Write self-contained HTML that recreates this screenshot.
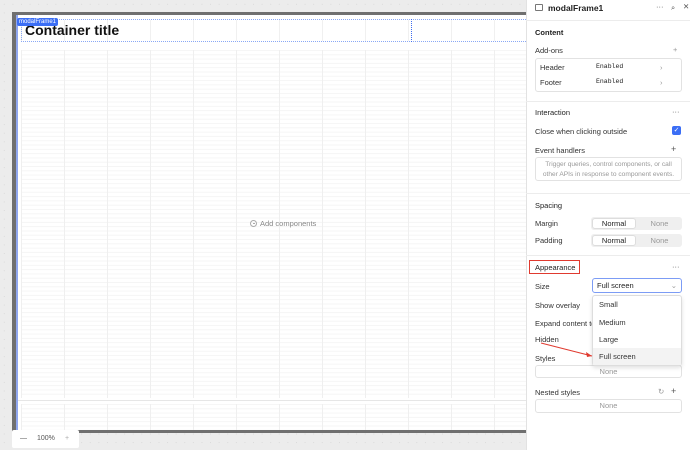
<!DOCTYPE html>
<html><head><meta charset="utf-8"><style>
*{box-sizing:border-box;margin:0;padding:0}
body{width:690px;height:450px;overflow:hidden;font-family:"Liberation Sans",sans-serif;background:#ececec;position:relative;font-size:7.5px;color:#222}
.canvas{position:absolute;left:0;top:0;width:526px;height:450px;background:#ececec;background-image:radial-gradient(#d9d9d9 0.5px,transparent 0.7px);background-size:8.6px 8.6px}
.frame{position:absolute;left:12px;top:12px;width:514px;height:421px;background:#6f6f6f}
.inner{position:absolute;left:16px;top:15px;width:510px;height:415px;background:#fff;border-left:2px solid #8fa6ee}
.grid{position:absolute;background-color:#fff;background-image:linear-gradient(90deg,#efefef 1px,transparent 1px),linear-gradient(#f5f5f5 1px,transparent 1px);background-size:43px 100%,100% 4.3px}
.hdr{position:absolute;left:21px;top:19px;width:505px;height:23px;border:1px dotted #8aa8f5;border-right:none}
.vd{position:absolute;left:411px;top:19px;height:23px;border-left:1.5px dotted #3d6cf0}
.tag{position:absolute;left:17px;top:18px;background:#3b6ef5;color:#fff;font-size:6px;padding:0 2px;border-radius:2px;height:8px;line-height:8px}
.title{position:absolute;left:25px;top:22px;font-size:14px;font-weight:bold;color:#111}
.add{position:absolute;left:250px;top:218px;color:#888;font-size:7.5px;display:flex;align-items:center;height:10px}
.add span{display:inline-block;width:7px;height:7px;border:1px solid #aaa;border-radius:50%;margin-right:3px;position:relative}
.add span:after{content:"";position:absolute;left:1.5px;top:2px;width:2px;height:1px;background:#aaa}
.zoomc{position:absolute;left:12px;top:430px;width:67px;height:18px;background:#fff;border-radius:2px;font-size:7px;color:#555;line-height:17px}
.panel{position:absolute;left:526px;top:0;width:164px;height:450px;background:#fff;border-left:1px solid #e2e2e2}
.p{position:absolute;white-space:nowrap}
.sec{font-weight:bold;color:#222}
.lbl{color:#333}
.sep{position:absolute;left:0;width:164px;border-top:1px solid #ececec}
.box{position:absolute;border:1px solid #e2e2e2;border-radius:3px}
.mono{font-family:"Liberation Mono",monospace;font-size:6.5px}
.gray{color:#999}
.seg{position:absolute;left:591px;width:91px;height:13px;background:#efefef;border-radius:3px}
.seg b{position:absolute;left:1px;top:1px;width:44px;height:11px;background:#fff;border:1px solid #ddd;border-radius:3px;font-weight:normal;text-align:center;line-height:9px;color:#222}
.seg i{position:absolute;left:46px;top:0;width:45px;text-align:center;line-height:13px;font-style:normal;color:#999}
</style></head><body>
<div class="canvas"></div>
<div class="frame"></div>
<div class="inner"></div>
<div class="grid" style="left:21px;top:50px;width:505px;height:348px"></div>
<div style="position:absolute;left:18px;top:400px;width:508px;height:1px;background:#e6e6e6"></div>
<div class="grid" style="left:21px;top:404px;width:505px;height:26px"></div>
<div class="grid" style="left:21px;top:20px;width:505px;height:21px;background-image:linear-gradient(90deg,#f0f0f0 1px,transparent 1px);background-size:43px 100%"></div>
<div class="hdr"></div><div class="vd"></div>
<div class="title">Container title</div>
<div class="tag">modalFrame1</div>
<div class="add"><span></span>Add components</div>
<div class="zoomc"><span style="position:absolute;left:8px">—</span><span style="position:absolute;left:25px">100%</span><span style="position:absolute;left:53px;color:#aaa">+</span></div>

<div class="panel"></div>
<div class="p" style="left:535px;top:4px;width:8px;height:7px;border:1px solid #777;border-radius:1px"></div>
<div class="p sec" style="left:548px;top:3px;font-size:8.5px">modalFrame1</div>
<div class="p" style="left:656px;top:2px;color:#555">···</div>
<div class="p" style="left:671px;top:3px;color:#555">⌕</div>
<div class="p" style="left:683px;top:2px;color:#555">✕</div>
<div class="sep" style="left:526px;top:20px"></div>
<div class="p sec" style="left:535px;top:28px">Content</div>
<div class="p lbl" style="left:535px;top:46px">Add-ons</div>
<div class="p gray" style="left:673px;top:45px">+</div>
<div class="box" style="left:535px;top:58px;width:147px;height:34px"></div>
<div class="p lbl" style="left:540px;top:63px">Header</div><div class="p mono" style="left:596px;top:63px">Enabled</div><div class="p gray" style="left:660px;top:63px">›</div>
<div class="p lbl" style="left:540px;top:78px">Footer</div><div class="p mono" style="left:596px;top:78px">Enabled</div><div class="p gray" style="left:660px;top:78px">›</div>
<div class="sep" style="left:526px;top:101px"></div>
<div class="p sec" style="left:535px;top:108px;font-weight:normal">Interaction</div>
<div class="p" style="left:672px;top:107px;color:#555">···</div>
<div class="p lbl" style="left:535px;top:127px">Close when clicking outside</div>
<div class="p" style="left:672px;top:126px;width:9px;height:9px;background:#3b6ef5;border-radius:2px;color:#fff;font-size:7px;line-height:9px;text-align:center">✓</div>
<div class="p lbl" style="left:535px;top:146px">Event handlers</div>
<div class="p" style="left:671px;top:144px;color:#555;font-size:9px">+</div>
<div class="box" style="left:535px;top:157px;width:147px;height:24px"></div>
<div class="p gray" style="left:537px;top:160px;line-height:10px;text-align:center;width:143px;white-space:normal;font-size:6.6px">Trigger queries, control components, or call other APIs in response to component events.</div>
<div class="sep" style="left:526px;top:193px"></div>
<div class="p sec" style="left:535px;top:201px;font-weight:normal">Spacing</div>
<div class="p lbl" style="left:535px;top:219px">Margin</div>
<div class="seg" style="top:217px"><b>Normal</b><i>None</i></div>
<div class="p lbl" style="left:535px;top:236px">Padding</div>
<div class="seg" style="top:234px"><b>Normal</b><i>None</i></div>
<div class="sep" style="left:526px;top:255px"></div>
<div class="p" style="left:529px;top:260px;width:51px;height:14px;border:1.5px solid #e03a2f"></div>
<div class="p sec" style="left:535px;top:263px;font-weight:normal">Appearance</div>
<div class="p" style="left:672px;top:262px;color:#555">···</div>
<div class="p lbl" style="left:535px;top:282px">Size</div>
<div class="p" style="left:592px;top:278px;width:90px;height:15px;border:1px solid #7c9cf5;border-radius:3px;padding-left:4px;line-height:13px">Full screen<span style="position:absolute;right:4px;color:#999">⌄</span></div>
<div class="p lbl" style="left:535px;top:301px">Show overlay</div>
<div class="p lbl" style="left:535px;top:319px">Expand content to</div>
<div class="p lbl" style="left:535px;top:335px">Hidden</div>
<div class="p lbl" style="left:535px;top:354px">Styles</div>
<div class="box" style="left:535px;top:365px;width:147px;height:13px;text-align:center;line-height:11px;color:#999">None</div>
<div class="p lbl" style="left:535px;top:388px">Nested styles</div>
<div class="p gray" style="left:658px;top:387px">↻</div><div class="p" style="left:671px;top:386px;color:#555;font-size:9px">+</div>
<div class="box" style="left:535px;top:399px;width:147px;height:14px;text-align:center;line-height:12px;color:#999">None</div>
<div class="p" style="left:592px;top:295px;width:90px;height:71px;background:#fff;border:1px solid #ddd;border-radius:3px;box-shadow:0 2px 4px rgba(0,0,0,.12)"></div>
<div class="p lbl" style="left:599px;top:300px">Small</div>
<div class="p lbl" style="left:599px;top:318px">Medium</div>
<div class="p lbl" style="left:599px;top:335px">Large</div>
<div class="p" style="left:593px;top:348px;width:88px;height:17px;background:#f3f3f3"></div>
<div class="p lbl" style="left:599px;top:352px">Full screen</div>
<svg class="p" style="left:540px;top:340px" width="60" height="20"><line x1="1" y1="3" x2="52" y2="16" stroke="#e03a2f" stroke-width="1"/><path d="M52 16 L46 12 L47 17 Z" fill="#e03a2f"/></svg>
</body></html>
